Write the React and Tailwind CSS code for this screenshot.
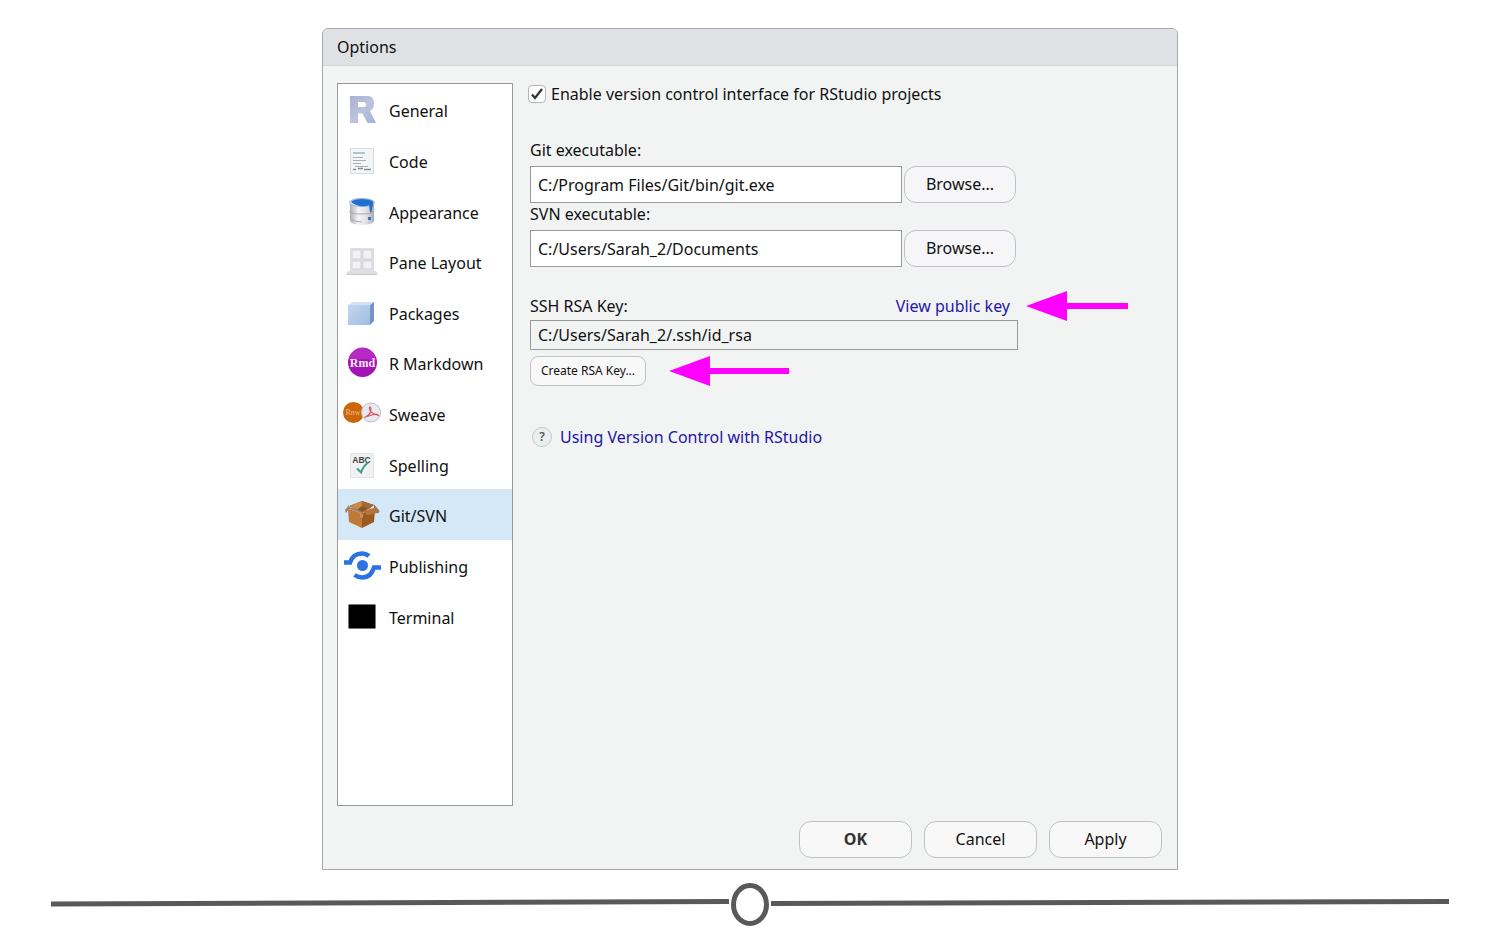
import React from "react";

function GeneralIcon() {
  return (
    <svg width="40" height="40" viewBox="0 0 40 40" aria-hidden="true">
      <defs>
        <linearGradient id="rfill" x1="0" y1="0" x2="1" y2="1">
          <stop offset="0" stopColor="#a9b1d2" />
          <stop offset="0.5" stopColor="#bcc3dd" />
          <stop offset="1" stopColor="#a4b2da" />
        </linearGradient>
      </defs>
      <path fillRule="evenodd" fill="url(#rfill)" d="M7 5h18q6 0 6 7.500q0 5.500-4 7.500l6 12h-8.500l-5-9.500h-4.500v9.500h-8zM15 11v5h6q2 0 2-2.500t-2-2.500z" />
    </svg>
  );
}

function CodeIcon() {
  return (
    <svg width="40" height="40" viewBox="0 0 40 40" aria-hidden="true">
      <rect x="7.500" y="6.500" width="23" height="25" fill="#f3f5f7" stroke="#d6dbe1" />
      <path d="M10 11h12" stroke="#8fb9c8" strokeWidth="1.500" />
      <path d="M10 15.500h10M10 18.500h13M10 21.500h8M12 24.500h13" stroke="#a9b0b8" />
      <path d="M10 27.500h3M15 26.500h5M21 27.500h7" stroke="#858c94" strokeWidth="1.500" />
    </svg>
  );
}

function AppearanceIcon() {
  return (
    <svg width="40" height="40" viewBox="0 0 40 40" aria-hidden="true">
      <defs>
        <linearGradient id="pail" x1="0" x2="1">
          <stop offset="0" stopColor="#a9b0b7" />
          <stop offset="0.35" stopColor="#f4f6f8" />
          <stop offset="0.7" stopColor="#dde1e6" />
          <stop offset="1" stopColor="#a2abb5" />
        </linearGradient>
      </defs>
      <path d="M7 9v19q2 4 12 4t12-4v-19z" fill="url(#pail)" />
      <ellipse cx="19" cy="9.500" rx="12.500" ry="4" fill="#e4edf6" stroke="#9db7d2" />
      <path d="M8 9q2-3 11-3t11.500 3l-.5 2-1.500 8q-1 1.500-1.500-.5l-1-6.500-2 1q-11 1-16-4z" fill="#1f70d0" />
      <path d="M6 18q1 3 13 3t12-3M8 26q4 3 11 3" fill="none" stroke="#c4a39b" />
      <rect x="25" y="24" width="3" height="3" fill="#466fb5" />
    </svg>
  );
}

function PaneIcon() {
  return (
    <svg width="40" height="40" viewBox="0 0 40 40" aria-hidden="true">
      <rect x="7" y="5" width="24" height="23" fill="#dfe0e3" />
      <path d="M9 7h9v9h-9zM20 7h9v9h-9zM9 18h9v8h-9zM20 18h9v8h-9z" fill="#f2f2f4" stroke="#d2d3d7" />
      <path d="M6 28h27l2 2-2 2h-29l-1-2z" fill="#dedfe2" />
      <path d="M4 31.500h30" stroke="#c8cacd" />
    </svg>
  );
}

function PackagesIcon() {
  return (
    <svg width="40" height="40" viewBox="0 0 40 40" aria-hidden="true">
      <defs>
        <linearGradient id="cube" x1="0" y1="0" x2="1" y2="1">
          <stop offset="0" stopColor="#c4d7f1" />
          <stop offset="1" stopColor="#9dbce2" />
        </linearGradient>
      </defs>
      <path d="M5 11l5-3h21l-4 3z" fill="#d3e0f4" />
      <path d="M5 11h22v20h-22z" fill="url(#cube)" />
      <path d="M27 11l4-3v19l-4 4z" fill="#7695c6" />
    </svg>
  );
}

function MarkdownIcon() {
  return (
    <svg width="40" height="40" viewBox="0 0 40 40" aria-hidden="true">
      <circle cx="19.500" cy="18.500" r="14.500" fill="#a512b4" />
      <path d="M6 17a13.500 13.500 0 0 1 27 0q-13-4-27 0z" fill="#b62ac3" />
      <text x="19.500" y="22.500" textAnchor="middle" fill="#fbe9fd" fontFamily="Liberation Serif, serif" fontWeight="700" fontSize="12">Rmd</text>
    </svg>
  );
}

function SweaveIcon() {
  return (
    <svg width="40" height="40" viewBox="0 0 40 40" aria-hidden="true">
      <circle cx="10.500" cy="17.500" r="10.500" fill="#cb6508" />
      <text x="10" y="20" textAnchor="middle" fill="#f0b985" fontFamily="Liberation Serif, serif" fontSize="8">Rnw</text>
      <circle cx="28" cy="17.500" r="9.500" fill="#e6e9ef" stroke="#b9bdc6" />
      <path d="M21.500 22.500q5-2 6-6t-.5-4.500q-1.500 1 .5 4t8 4.500q-1-2.500-7-.5t-7 2.500z" fill="none" stroke="#d8565c" strokeWidth="1.200" />
    </svg>
  );
}

function SpellingIcon() {
  return (
    <svg width="40" height="40" viewBox="0 0 40 40" aria-hidden="true">
      <rect x="7.500" y="7.500" width="23" height="24" fill="#eff1f3" stroke="#e2e5e8" />
      <text x="18.500" y="17" textAnchor="middle" fill="#444" fontFamily="Liberation Sans, sans-serif" fontWeight="700" fontSize="8.500">ABC</text>
      <path d="M14 22.500l4 4q2-6 7-10" fill="none" stroke="#419d79" strokeWidth="2" />
    </svg>
  );
}

function GitIcon() {
  return (
    <svg width="40" height="40" viewBox="0 0 40 40" aria-hidden="true">
      <path d="M6 10l13-5 12 4-12 8z" fill="#8a5423" />
      <path d="M7 10l12-5v5l-5 4z" fill="#c98a4c" />
      <path d="M19 5l12 4-5 4-7-3z" fill="#a56830" />
      <path d="M5 13l14 4v15l-13-6z" fill="#c07a38" />
      <path d="M19 17l13-3-1 12-12 6z" fill="#9a5a24" />
      <path d="M6 9l-4 5 1 3 3-4 13 4-1-2-12-4z" fill="#9c8060" />
      <path d="M31 9l5 6-1 2-11 2-5-4 12-3z" fill="#b5743a" />
      <path d="M31 9l5 6-1 2" fill="none" stroke="#85705a" />
      <path d="M17 17v4l3 1v-4z" fill="#c99058" />
    </svg>
  );
}

function PublishingIcon() {
  return (
    <svg width="40" height="40" viewBox="0 0 40 40" aria-hidden="true">
      <circle cx="19.500" cy="18.500" r="5.500" fill="#2a73e0" />
      <path d="M1 15.500h6q3-9 12-9 4 0 7 2.500M38 20.500h-7q-3 10-11.500 10-4.500 0-8-2.500" fill="none" stroke="#2a73e0" strokeWidth="4.500" />
    </svg>
  );
}

function TerminalIcon() {
  return (
    <svg width="40" height="40" viewBox="0 0 40 40" aria-hidden="true">
      <rect x="5.500" y="6.500" width="27" height="24" rx="1" fill="#000" stroke="#777" />
    </svg>
  );
}

const sections = [
  ["General", GeneralIcon],
  ["Code", CodeIcon],
  ["Appearance", AppearanceIcon],
  ["Pane Layout", PaneIcon],
  ["Packages", PackagesIcon],
  ["R Markdown", MarkdownIcon],
  ["Sweave", SweaveIcon],
  ["Spelling", SpellingIcon],
  ["Git/SVN", GitIcon],
  ["Publishing", PublishingIcon],
  ["Terminal", TerminalIcon],
];

function PathRow({ id, label, value }) {
  return (
    <div>
      <label htmlFor={id} className="block h-[27px] leading-[22px]">{label}</label>
      <div className="flex items-start gap-0.5">
        <input id={id} defaultValue={value} className="h-[37px] min-w-0 flex-1 border border-[#999] bg-white px-[7px] outline-none" />
        <button className="h-[37px] w-28 rounded-xl border border-[#bfc1c4] bg-[#f6f6f8] pb-0.5">Browse...</button>
      </div>
    </div>
  );
}

function DialogButton({ children, strong }) {
  return (
    <button className={strong ? "h-[37px] w-[113px] rounded-xl border border-[#bfc1c4] bg-[#f8f8f9] pb-0.5 font-bold text-[#333]" : "h-[37px] w-[113px] rounded-xl border border-[#bfc1c4] bg-[#f8f8f9] pb-0.5"}>
      {children}
    </button>
  );
}

export default function App() {
  return (
    <main className="bg-white px-[51px] pt-7 font-['Noto_Sans','Open_Sans',sans-serif] text-base leading-6 text-[#111]">
      <section className="mx-auto max-w-[856px] rounded-t-md border border-[#a5a8ab] bg-[#f2f4f4]">
        <header className="rounded-t-md border-b border-[#d5d7da] bg-[#e0e1e5] px-3.5 py-1.5 leading-6">
          <h1>Options</h1>
        </header>
        <div className="flex gap-[15px] px-3.5 pt-[17px]">
          <nav className="h-[723px] w-44 shrink-0 border border-[#999] bg-white">
            <div className="grid h-[557px] auto-rows-fr">
              {sections.map(([name, Icon]) => (
                <button key={name} className={name === "Git/SVN" ? "flex items-center gap-[6px] bg-[#d5e8f7] pt-1 pl-[5px] text-left" : "flex items-center gap-[6px] pt-1 pl-[5px] text-left"}>
                  <Icon />
                  <span>{name}</span>
                </button>
              ))}
            </div>
          </nav>
          <div className="min-w-0 flex-1">
            <label className="flex items-center gap-[5px] leading-[22px]">
              <span className="grid size-[18px] place-items-center">
                <input type="checkbox" defaultChecked className="peer col-start-1 row-start-1 size-[18px] appearance-none rounded-sm border border-[#b5b5b8] bg-white" />
                <svg className="pointer-events-none col-start-1 row-start-1 hidden peer-checked:block" width="14" height="14" viewBox="0 0 14 14" aria-hidden="true">
                  <path d="M2 7.500l3 3.500 7-9" fill="none" stroke="#333" strokeWidth="2.200" />
                </svg>
              </span>
              Enable version control interface for RStudio projects
            </label>
            <div className="ml-0.5 max-w-[488px] pt-[34px]">
              <div className="max-w-[486px]">
                <PathRow id="git" label="Git executable:" value="C:/Program Files/Git/bin/git.exe" />
                <PathRow id="svn" label="SVN executable:" value="C:/Users/Sarah_2/Documents" />
              </div>
              <div className="relative mt-[27px] flex justify-between pr-2 leading-6">
                <label htmlFor="ssh">SSH RSA Key:</label>
                <a href="#key" className="text-[#2316a8]">View public key</a>
                <svg className="absolute top-[-3px] left-full ml-2" width="102" height="30" viewBox="0 0 102 30" aria-hidden="true">
                  <path d="M0 15L41 0v12h61v6H41v12z" fill="#f0f" />
                </svg>
              </div>
              <input id="ssh" readOnly defaultValue="C:/Users/Sarah_2/.ssh/id_rsa" className="mt-0.5 block h-[30px] w-full border border-[#999] bg-[#f2f4f4] px-[7px] outline-none" />
              <div className="mt-1.5 flex gap-[23px]">
                <button className="h-[30px] w-[116px] rounded-lg border border-[#bfc1c4] bg-[#f8f8f9] text-xs">Create RSA Key...</button>
                <svg width="120" height="30" viewBox="0 0 120 30" aria-hidden="true">
                  <path d="M0 15L41 0v12h79v6H41v12z" fill="#f0f" />
                </svg>
              </div>
              <div className="mt-[39px] flex items-center gap-2 pl-0.5">
                <span className="grid size-5 place-items-center rounded-full border border-[#c3c7ce] bg-[#eceef0] text-xs font-semibold text-[#555]">?</span>
                <a href="#help" className="text-[#2316a8]">Using Version Control with RStudio</a>
              </div>
            </div>
          </div>
        </div>
        <footer className="flex justify-end gap-3 px-[15px] pt-[15px] pb-[11px]">
          <DialogButton strong>OK</DialogButton>
          <DialogButton>Cancel</DialogButton>
          <DialogButton>Apply</DialogButton>
        </footer>
      </section>
      <svg className="mt-3 block w-full" viewBox="0 0 1398 46" aria-hidden="true">
        <path d="M0 22L678 19.500M720 21.500L1398 19.500" stroke="#595959" strokeWidth="5" />
        <ellipse cx="699" cy="22.500" rx="16.500" ry="19" fill="#fff" stroke="#595959" strokeWidth="5" />
      </svg>
    </main>
  );
}
